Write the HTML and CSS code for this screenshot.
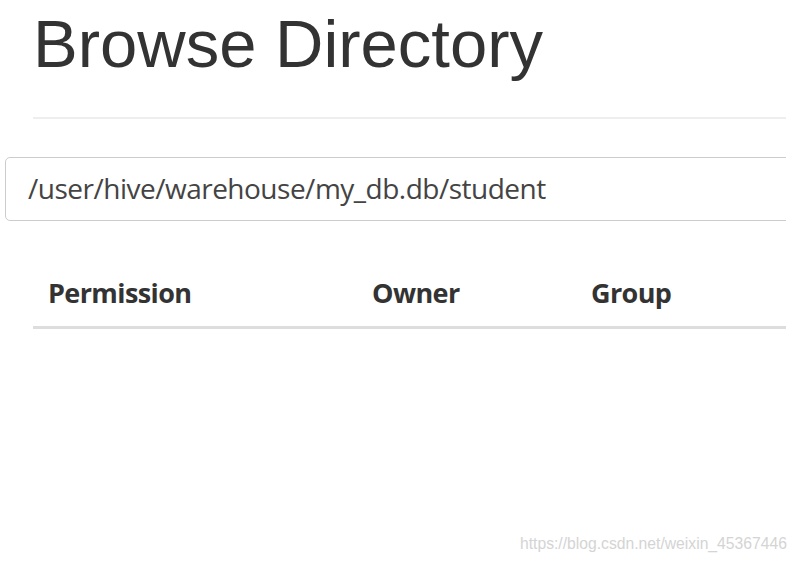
FILE: index.html
```html
<!DOCTYPE html>
<html>
<head>
<meta charset="utf-8">
<link rel="stylesheet" href="styles.css">
</head>
<body>
<div class="page">
  <div class="page-header">
    <h1 class="title">Browse Directory</h1>
  </div>
  <div class="path-row">
    <div class="path-input">/user/hive/warehouse/my_db.db/student</div>
  </div>
  <div class="table">
    <div class="th th-perm">Permission</div>
    <div class="th th-owner">Owner</div>
    <div class="th th-group">Group</div>
  </div>
</div>
<div class="watermark">https://blog.csdn.net/weixin_45367446</div>
</body>
</html>
```

FILE: styles.css
```css
html, body {
  margin: 0;
  padding: 0;
  background: #fff;
}
body {
  position: relative;
  width: 801px;
  height: 563px;
  overflow: hidden;
}
.page {
  width: 786px;
  height: 563px;
  overflow: hidden;
  font-family: "Liberation Sans", Arial, sans-serif;
  color: #333;
}
.page-header {
  margin-left: 33px;
  padding-top: 2px;
  padding-bottom: 31px;
  border-bottom: 2px solid #eee;
}
.title {
  margin: 0;
  font-weight: normal;
  font-size: 67px;
  line-height: 84px;
}
.path-row {
  margin-top: 38px;
  padding-left: 5px;
}
.path-input {
  width: 820px;
  height: 64px;
  box-sizing: border-box;
  border: 1px solid #ccc;
  border-radius: 5px;
  padding-left: 22px;
  font-family: "Open Sans", sans-serif;
  font-size: 28px;
  letter-spacing: -0.5px;
  line-height: 60px;
  color: #444;
}
.table {
  margin-left: 33px;
  margin-top: 49px;
  display: flex;
  height: 56px;
  border-bottom: 3px solid #ddd;
}
.th {
  font-family: "Open Sans", sans-serif;
  font-weight: bold;
  font-size: 27px;
  letter-spacing: -0.6px;
  line-height: 46px;
  color: #333;
}
.th-perm { margin-left: 15px; width: 324px; }
.th-owner { width: 219px; }
.watermark {
  position: absolute;
  left: 520px;
  top: 535px;
  font-family: "Liberation Sans", Arial, sans-serif;
  font-size: 15.7px;
  color: #d4d4d4;
  white-space: nowrap;
}
```
